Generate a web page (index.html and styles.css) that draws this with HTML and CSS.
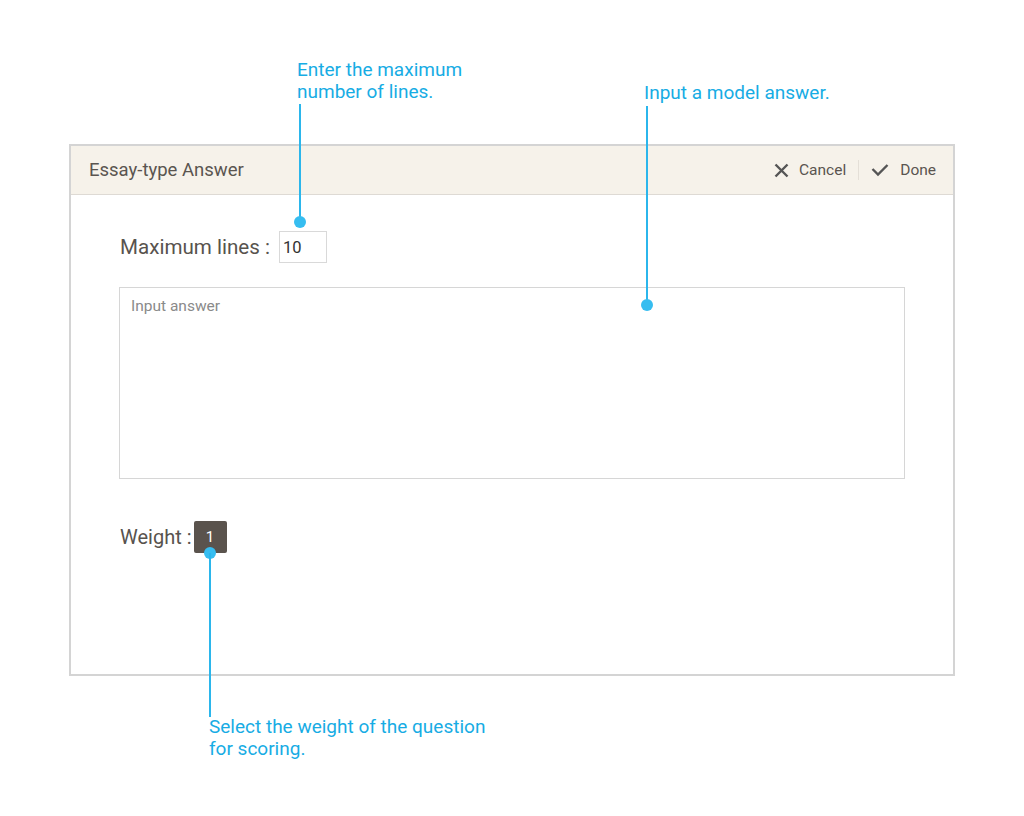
FILE: index.html
```html
<!DOCTYPE html>
<html lang="en">
<head>
  <meta charset="UTF-8">
  <title>Essay-type Answer</title>
  <link rel="stylesheet" href="styles.css">
</head>
<body>
  <div class="page">
    <div class="dialog">
      <div class="dialog-header">
        <span class="dialog-title">Essay-type Answer</span>
        <div class="actions">
          <a class="action">
            <svg width="15" height="15" viewBox="0 0 15 15"><path d="M1.5 1.5 L13.5 13.5 M13.5 1.5 L1.5 13.5" stroke="#555" stroke-width="2.4" fill="none"/></svg>
            Cancel
          </a>
          <span class="divider"></span>
          <a class="action done">
            <svg width="18" height="14" viewBox="0 0 18 14"><path d="M1.5 6 L7 11.5 L16.5 2" stroke="#555" stroke-width="2.4" fill="none"/></svg>
            Done
          </a>
        </div>
      </div>

      <div class="dialog-body">
        <div class="field-row">
          <label class="field-label lines-label">Maximum lines :</label>
          <div class="num-input">10</div>
        </div>

        <div class="answer-box">Input answer</div>

        <div class="field-row weight-row">
          <label class="field-label">Weight :</label>
          <div class="weight-box">1</div>
        </div>
      </div>
    </div>

    <!-- callouts -->
    <div class="note note-lines">Enter the maximum<br>number of lines.</div>
    <div class="leader" style="left: 299px; top: 104px; height: 118px;"></div>
    <div class="dot" style="left: 294px; top: 216px;"></div>

    <div class="note note-answer">Input a model answer.</div>
    <div class="leader" style="left: 646px; top: 106px; height: 199px;"></div>
    <div class="dot" style="left: 641px; top: 299px;"></div>

    <div class="dot" style="left: 204px; top: 547px;"></div>
    <div class="leader" style="left: 209px; top: 553px; height: 164px;"></div>
    <div class="note note-weight">Select the weight of the question<br>for scoring.</div>
  </div>
</body>
</html>
```

FILE: styles.css
```css
* {
  box-sizing: border-box;
}

body {
  margin: 0;
  font-family: Roboto, "Liberation Sans", sans-serif;
  color: #59544f;
  background: #fff;
}

.page {
  position: relative;
  width: 1024px;
  height: 816px;
  padding: 144px 0 0 69px;
}

.dialog {
  width: 886px;
  height: 532px;
  border: 2px solid #d4d4d4;
}

.dialog-header {
  height: 49px;
  display: flex;
  align-items: center;
  justify-content: space-between;
  padding: 0 17px 0 18px;
  background-color: #f6f2ea;
  border-bottom: 1px solid #dedad4;
}

.dialog-title {
  font-size: 18.5px;
  color: #5a5550;
}

.actions {
  display: flex;
  align-items: center;
}

.action {
  display: flex;
  align-items: center;
  gap: 10px;
  font-size: 15.5px;
  color: #5a5550;
  cursor: pointer;
}

.action.done {
  gap: 11px;
}

.divider {
  width: 1px;
  height: 20px;
  background-color: #e4dfd7;
  margin: 0 12px 0 12px;
}

.dialog-body {
  padding: 36px 48px 0 48px;
}

.field-row {
  display: flex;
  align-items: center;
  padding-left: 1px;
}

.field-label {
  font-size: 20px;
  color: #58534e;
  margin-right: 2px;
}

.lines-label {
  font-size: 20.6px;
  margin-right: 9px;
}

.num-input {
  width: 48px;
  height: 32px;
  border: 1px solid #d9d9d9;
  font-size: 16.5px;
  color: #333;
  padding: 6px 0 0 3px;
}

.answer-box {
  margin-top: 24px;
  width: 786px;
  height: 192px;
  border: 1px solid #d6d6d6;
  padding: 9px 11px;
  font-size: 15.5px;
  color: #8a8a8a;
}

.weight-row {
  margin-top: 42px;
}

.weight-box {
  width: 33px;
  height: 32px;
  background-color: #5a534d;
  border-radius: 2px;
  color: #fff;
  font-size: 15px;
  text-align: center;
  line-height: 32px;
}

/* callouts */
.note {
  position: absolute;
  font-size: 19px;
  line-height: 22px;
  color: #17ace4;
}

.note-lines {
  left: 297px;
  top: 59px;
}

.note-answer {
  left: 644px;
  top: 82px;
}

.note-weight {
  left: 209px;
  top: 716px;
}

.leader {
  position: absolute;
  width: 2px;
  background-color: #2bb6ec;
}

.dot {
  position: absolute;
  width: 12px;
  height: 12px;
  border-radius: 50%;
  background-color: #36bdf0;
}
```
